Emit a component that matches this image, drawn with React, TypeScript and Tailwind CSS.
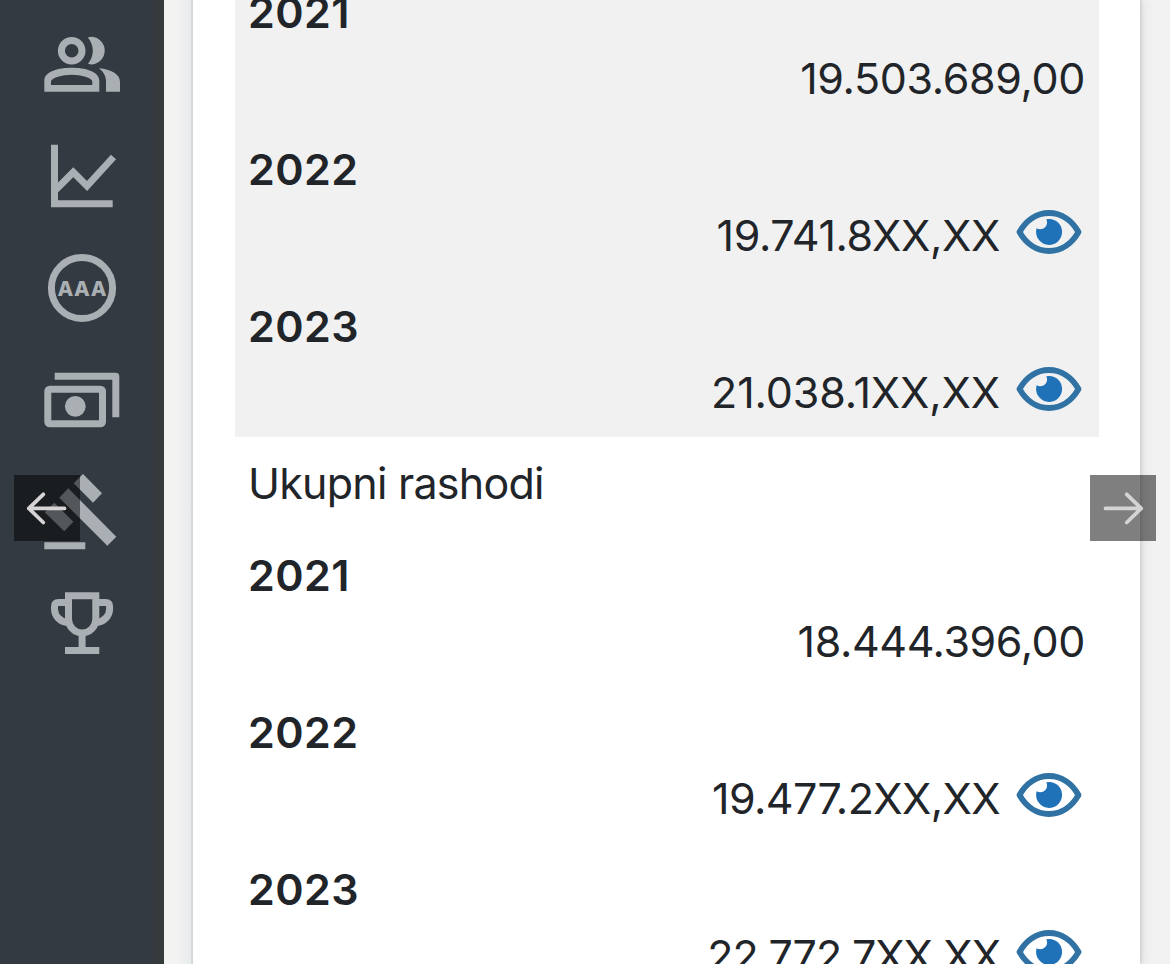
import type { ReactNode } from 'react';

type Entry = { year: string; value: string; locked?: boolean; tracking: string };

const income: Entry[] = [
  { year: '2021', value: '19.503.689,00', tracking: 'tracking-[-0.35px]' },
  { year: '2022', value: '19.741.8XX,XX', locked: true, tracking: 'tracking-[-0.35px]' },
  { year: '2023', value: '21.038.1XX,XX', locked: true, tracking: 'tracking-[-0.1px]' },
];

const expenses: Entry[] = [
  { year: '2021', value: '18.444.396,00', tracking: 'tracking-[-0.4px]' },
  { year: '2022', value: '19.477.2XX,XX', locked: true, tracking: 'tracking-[-0.6px]' },
  { year: '2023', value: '22.772.7XX,XX', locked: true, tracking: 'tracking-[-1px]' },
];

const NavIcon = ({ children }: { children: ReactNode }) => (
  <svg viewBox="0 0 82 82" className="block h-[82px] w-[82px] shrink-0" fill="none">
    {children}
  </svg>
);

const PeopleIcon = () => (
  <NavIcon>
    <circle cx="30.7" cy="27.7" r="10.3" stroke="currentColor" strokeWidth="7" />
    <g fill="currentColor">
      <path d="M46.8 14.400Q49 13.700 51 13.700A13.900 13.900 0 0 1 51 41.400Q49 41.400 47 40.800C53.500 32.500 53.500 22.500 46.800 14.400Z" />
      <path
        fillRule="evenodd"
        d="M3.3 68.7V58C3.3 48 18 44.7 30.8 44.7S58.3 48 58.3 58V68.7ZM10 62H51.3V58.5C51.3 55 40 51.7 30.7 51.7S10 55 10 58.5Z"
      />
      <path d="M58 45.3C70 46.500 79 51 79 59V68.700H65V58.500C65 53 62.500 49 58 45.300Z" />
    </g>
  </NavIcon>
);

const ChartIcon = () => (
  <NavIcon>
    <path d="M13.5 9.7V68.8H71.7" stroke="currentColor" strokeWidth="7" />
    <path d="M13.5 56L32.3 37.3L46 51L72.5 22" stroke="currentColor" strokeWidth="7" />
  </NavIcon>
);

const RatingIcon = () => (
  <NavIcon>
    <circle cx="41" cy="41" r="30.6" stroke="currentColor" strokeWidth="7" />
    <text
      x="41"
      y="48.6"
      textAnchor="middle"
      fill="currentColor"
      className="font-[Inter,sans-serif] text-[20.5px] font-extrabold"
      textLength="49"
    >
      AAA
    </text>
  </NavIcon>
);

const CashIcon = () => (
  <NavIcon>
    <path d="M13.7 17.2H74.8V58.3" stroke="currentColor" strokeWidth="7" strokeLinejoin="round" />
    <rect x="6.8" y="30.2" width="54.7" height="34.6" rx="2" stroke="currentColor" strokeWidth="7" />
    <circle cx="34.3" cy="47.3" r="10.4" fill="currentColor" />
  </NavIcon>
);

const GavelIcon = () => (
  <NavIcon>
    <g fill="currentColor">
      <path d="M27.3 17.3L75.3 65.7L66.3 74.7L18.3 26.7Z" />
      <path d="M42 3L61 22.3L52 31.7L32.7 12.3Z" />
      <path d="M13.3 31.7L32.3 50.7L23.3 60.3L3.7 41.3Z" />
      <path d="M3.3 71.3H44.3V78.3H3.3Z" />
    </g>
  </NavIcon>
);

const TrophyIcon = () => (
  <NavIcon>
    <g stroke="currentColor" strokeWidth="7">
      <path d="M27.5 12.8H54.8V36A13.65 14 0 0 1 27.5 36Z" />
      <path d="M27.5 19.5H17.5Q13.5 19.5 13.5 23.5V26C13.5 33 19 38.5 26 39.5" />
      <path d="M54.8 19.5H64.6Q68.6 19.5 68.6 23.5V26C68.6 33 63 38.5 56 39.5" />
      <path d="M41.1 50V67.5M24 67.5H58.3" />
    </g>
  </NavIcon>
);

const EyeIcon = () => (
  <svg viewBox="0 0 66 44" className="mr-[3px] -mt-[7px] ml-4 h-11 w-[66px] shrink-0" fill="none">
    <path
      d="M3.500 22C10 10.500 20.500 3 33 3S56 10.500 62.500 22C56 33.500 45.500 41 33 41S10 33.500 3.500 22Z"
      stroke="#2f72a3"
      strokeWidth="5.8"
      strokeLinejoin="round"
    />
    <path d="M30.300 9.200A13 13 0 1 1 20.600 18.300C26.500 21.500 33.500 16 30.300 9.200Z" fill="#1f72b8" />
  </svg>
);

const YearRow = ({ year, value, locked, tracking }: Entry) => (
  <div className="h-[157px] px-[13.5px] pt-3.5 leading-[65.5px]">
    <div className="text-[43px] font-semibold tracking-[0.4px]">{year}</div>
    <div className="flex items-center justify-end">
      <span className={tracking}>{value}</span>
      {locked && <EyeIcon />}
    </div>
  </div>
);

const App = () => (
  <div className="relative flex h-[964px] w-[1170px] overflow-hidden bg-[#f2f2f2] font-[Inter,sans-serif] text-[#212529]">
    <aside className="flex w-[164px] shrink-0 flex-col items-center gap-[30px] bg-linear-to-r from-[#343a41] from-92% to-[#353a3b] to-97% pt-[23px] text-[#a9afb2]">
      <PeopleIcon />
      <ChartIcon />
      <RatingIcon />
      <CashIcon />
      <GavelIcon />
      <TrophyIcon />
    </aside>

    <div className="w-[29px] shrink-0 border-r-2 border-[#d6dbdd] bg-linear-to-r from-[#f3f3f2] from-40% to-[#e9eded]" />

    <main className="w-[947px] shrink-0 bg-white px-[41.5px] text-[43px] shadow-[1px_0_3px_#c8c8c8,3px_0_10px_#dddddd]">
      <section className="-mt-[34px] bg-[#f1f1f1]">
        {income.map((entry) => (
          <YearRow key={entry.year} {...entry} />
        ))}
      </section>
      <section>
        <h2 className="h-[92px] px-[13.5px] pt-[13px] leading-[66px] tracking-[-0.75px]">Ukupni rashodi</h2>
        {expenses.map((entry) => (
          <YearRow key={entry.year} {...entry} />
        ))}
      </section>
    </main>

    {/* Gallery controls over the page */}
    <button className="absolute top-[475px] left-3.5 h-[66px] w-[66px] bg-black/50">
      <svg viewBox="0 0 66 66" fill="none" stroke="#d6d4d4" strokeWidth="3.7" strokeLinecap="round" strokeLinejoin="round">
        <path d="M50.5 33.4H14.8M29.3 19.3L14.8 33.4L29.3 47.5" />
      </svg>
    </button>
    <button className="absolute top-[475px] right-3.5 h-[66px] w-[66px] bg-black/50">
      <svg viewBox="0 0 66 66" fill="none" stroke="#d4d4d4" strokeWidth="3.7" strokeLinecap="round" strokeLinejoin="round">
        <path d="M15.5 33.4H51.2M36.7 19.3L51.2 33.4L36.7 47.5" />
      </svg>
    </button>
  </div>
);

export default App;
